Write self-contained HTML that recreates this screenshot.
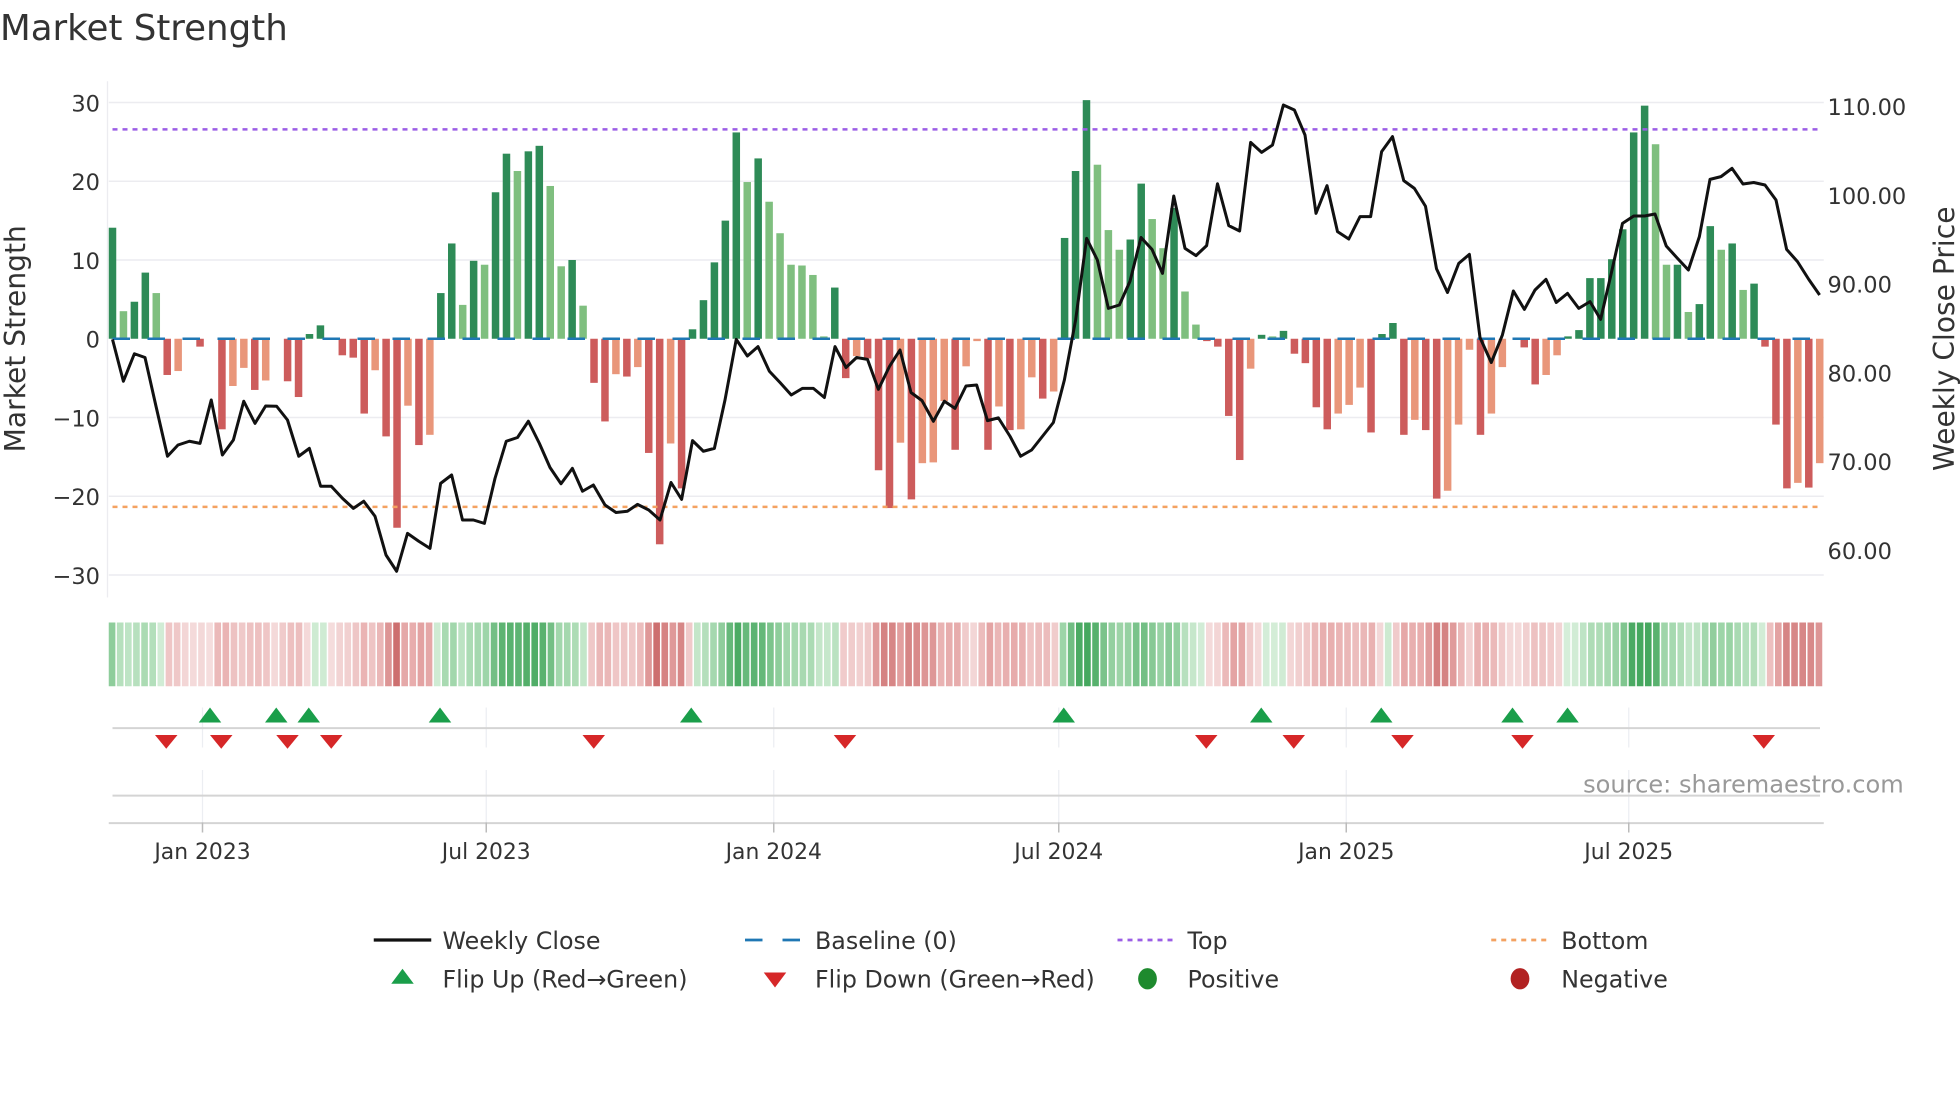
<!DOCTYPE html>
<html><head><meta charset="utf-8"><style>
html,body{margin:0;padding:0;background:#fff;width:1960px;height:1102px;overflow:hidden}
svg{display:block}
text{font-family:"DejaVu Sans","Liberation Sans",sans-serif;fill:#333}
</style></head><body>
<svg id="s" width="1960" height="1102" viewBox="0 0 1568 881.6" xmlns="http://www.w3.org/2000/svg">
<text x="0" y="32" font-size="28.5" fill="#333">Market Strength</text>
<g id="grid" stroke="#ececf0" stroke-width="1.2">
<line x1="87" x2="1459" y1="82" y2="82"/><line x1="87" x2="1459" y1="145" y2="145"/>
<line x1="87" x2="1459" y1="208" y2="208"/><line x1="87" x2="1459" y1="334" y2="334"/>
<line x1="87" x2="1459" y1="397" y2="397"/><line x1="87" x2="1459" y1="460" y2="460"/>
</g>
<line x1="86" x2="86" y1="65" y2="478" stroke="#ececf0" stroke-width="1"/>
<g font-size="18" text-anchor="end">
<text x="80" y="89">30</text><text x="80" y="152">20</text><text x="80" y="215">10</text>
<text x="80" y="278">0</text><text x="80" y="341">−10</text><text x="80" y="404">−20</text><text x="80" y="467">−30</text>
</g>
<g font-size="18">
<text x="1462" y="92">110.00</text><text x="1462" y="163">100.00</text><text x="1462" y="234">90.00</text>
<text x="1462" y="305">80.00</text><text x="1462" y="376">70.00</text><text x="1462" y="447">60.00</text>
</g>
<text transform="translate(20,271) rotate(-90)" font-size="22.5" text-anchor="middle">Market Strength</text>
<text transform="translate(1563,271) rotate(-90)" font-size="22.5" text-anchor="middle">Weekly Close Price</text>
<g id="bars"></g>
<line x1="90" x2="1456" y1="271" y2="271" stroke="#1f77b4" stroke-width="2" stroke-dasharray="14 14"/>
<line x1="90" x2="1456" y1="103.5" y2="103.5" stroke="#9b5de5" stroke-width="2" stroke-dasharray="4 4"/>
<line x1="90" x2="1456" y1="405.5" y2="405.5" stroke="#f4a261" stroke-width="2" stroke-dasharray="4 4"/>
<polyline id="price" fill="none" stroke="#111" stroke-width="2.4" stroke-linejoin="round"/>
<g id="heat"></g>
<g stroke="#eceef2" stroke-width="1">
<line x1="162" x2="162" y1="566" y2="598"/><line x1="389" x2="389" y1="566" y2="598"/><line x1="619" x2="619" y1="566" y2="598"/><line x1="847" x2="847" y1="566" y2="598"/><line x1="1077" x2="1077" y1="566" y2="598"/><line x1="1303" x2="1303" y1="566" y2="598"/>
<line x1="162" x2="162" y1="616" y2="658"/><line x1="389" x2="389" y1="616" y2="658"/><line x1="619" x2="619" y1="616" y2="658"/><line x1="847" x2="847" y1="616" y2="658"/><line x1="1077" x2="1077" y1="616" y2="658"/><line x1="1303" x2="1303" y1="616" y2="658"/>
</g>
<line x1="90" x2="1456" y1="582.5" y2="582.5" stroke="#d4d4d4" stroke-width="1.6"/>
<line x1="90" x2="1456" y1="636.5" y2="636.5" stroke="#d4d4d4" stroke-width="1.6"/>
<line x1="87" x2="1459" y1="658.5" y2="658.5" stroke="#d4d4d4" stroke-width="1.6"/>
<g stroke="#bbb" stroke-width="1.2">
<line x1="162" x2="162" y1="658" y2="666"/><line x1="389" x2="389" y1="658" y2="666"/><line x1="619" x2="619" y1="658" y2="666"/><line x1="847" x2="847" y1="658" y2="666"/><line x1="1077" x2="1077" y1="658" y2="666"/><line x1="1303" x2="1303" y1="658" y2="666"/>
</g>
<g id="tri"></g>
<text x="1523" y="634" font-size="19.3" text-anchor="end" style="fill:#999">source: sharemaestro.com</text>
<g font-size="17.5" text-anchor="middle">
<text x="162" y="687">Jan 2023</text><text x="389" y="687">Jul 2023</text><text x="619" y="687">Jan 2024</text>
<text x="847" y="687">Jul 2024</text><text x="1077" y="687">Jan 2025</text><text x="1303" y="687">Jul 2025</text>
</g>
<g font-size="19">
<line x1="299" x2="345" y1="752" y2="752" stroke="#111" stroke-width="2.6"/>
<text x="354" y="759">Weekly Close</text>
<line x1="596" x2="642" y1="752" y2="752" stroke="#1f77b4" stroke-width="2.2" stroke-dasharray="14 16"/>
<text x="652" y="759">Baseline (0)</text>
<line x1="894" x2="940" y1="752" y2="752" stroke="#9b5de5" stroke-width="2.2" stroke-dasharray="4 4"/>
<text x="950" y="759">Top</text>
<line x1="1193" x2="1239" y1="752" y2="752" stroke="#f4a261" stroke-width="2.2" stroke-dasharray="4 4"/>
<text x="1249" y="759">Bottom</text>
<polygon points="322,775 331,787 313,787" fill="#1a9e4a"/>
<text x="354" y="790">Flip Up (Red→Green)</text>
<polygon points="611,778 629,778 620,790" fill="#d62728"/>
<text x="652" y="790">Flip Down (Green→Red)</text>
<ellipse cx="918" cy="783" rx="7.5" ry="8.5" fill="#1e8a2e"/>
<text x="950" y="790">Positive</text>
<ellipse cx="1216" cy="783" rx="7.5" ry="8.5" fill="#b22222"/>
<text x="1249" y="790">Negative</text>
</g>
</svg>
<script>
var NS="http://www.w3.org/2000/svg";
var d="D14.1 L3.5 D4.7 D8.4 L5.8 R-4.6 O-4.1 Z0 R-1 Z0 R-11.5 O-6 O-3.7 R-6.5 O-5.3 Z0 R-5.4 R-7.4 D0.6 D1.7 Z0 R-2.1 R-2.4 R-9.5 O-4 R-12.4 R-24 O-8.5 R-13.5 O-12.2 D5.8 D12.1 L4.3 D9.9 L9.4 D18.6 D23.5 L21.3 D23.8 D24.5 L19.4 L9.2 D10 L4.2 R-5.6 R-10.5 O-4.5 R-4.8 O-3.6 R-14.5 R-26.1 O-13.3 R-19 D1.2 D4.9 D9.7 D15 D26.2 L19.9 D22.9 L17.4 L13.4 L9.4 L9.3 L8.1 L0.3 D6.5 R-5 O-2.2 R-2.5 R-16.7 R-21.5 O-13.2 R-20.4 O-15.8 O-15.7 O-7.9 R-14.1 O-3.5 O-0.3 R-14.1 O-8.6 R-11.6 O-11.5 O-4.9 R-7.6 O-6.7 D12.8 D21.3 D30.3 L22.1 L13.8 L11.3 D12.6 D19.7 L15.2 L11.5 D16.6 L6 L1.8 R-0.3 R-1 R-9.8 R-15.4 O-3.8 D0.5 L0.3 D1 R-1.9 R-3.1 R-8.7 R-11.5 O-9.5 O-8.4 O-6.2 R-11.9 D0.6 D2 R-12.2 O-10.3 R-11.6 R-20.3 O-19.3 O-10.9 O-1.4 R-12.2 O-9.5 O-3.6 Z0 R-1.1 R-5.8 O-4.6 O-2.1 D0.3 D1.1 D7.7 D7.7 D10.1 D13.9 D26.2 D29.6 L24.7 L9.4 D9.4 L3.4 D4.4 D14.3 L11.3 D12.1 L6.2 D7 R-1 R-10.9 R-19 O-18.3 R-18.9 O-15.8".split(" ");
var col={D:"#2e8b57",L:"#7fbf7f",R:"#cd5c5c",O:"#e9967a"};
var vals=[],bars=document.getElementById("bars");
d.forEach(function(s,i){var t=s[0],v=parseFloat(s.slice(1));vals.push(v);if(t=="Z")return;
var x=90+i*8.755,y0=271,y1=271-v*6.3;var r=document.createElementNS(NS,"rect");
r.setAttribute("x",x-3);r.setAttribute("width",6);r.setAttribute("y",Math.min(y0,y1));r.setAttribute("height",Math.max(0.8,Math.abs(y1-y0)));r.setAttribute("fill",col[t]);bars.appendChild(r);});
var p=[[90,271.5],[98.7,305],[107.5,283],[116,286],[124.8,325],[134,365],[142.4,356],[151.5,353],[160,354.7],[169,320],[177.9,364],[186.7,352],[195,321],[204,338.7],[212.5,324.8],[221.3,325],[230,336],[239,365],[247.5,358.7],[256.5,389],[265,389],[274,398.7],[282.7,406.7],[291,401],[300,413],[308.8,444],[317.3,457],[326,426.7],[335,433],[344,438.7],[352.5,386.7],[361.3,380],[370,416],[378.7,416],[387.5,418.7],[396,382.7],[405,353],[414,350],[422.7,337],[431.5,354.7],[440,374],[448.8,387],[457.9,374.7],[466,393],[474.7,388],[484,404],[492.8,410],[501.9,409],[510,403.5],[519,408],[528,416],[536.8,386],[545.3,399.5],[554,352.5],[562.7,361],[571.5,358.7],[580,320],[589,271.5],[597.9,284.8],[606.4,277.3],[615.5,297],[624,306],[633,316],[641.9,310.7],[650.7,310.7],[659.5,318],[668,277.3],[676.8,294],[685.3,286],[694,287.5],[702.7,311.5],[711.5,293.3],[720,280],[728.8,314],[737.6,320.5],[746.7,337],[755.5,321],[764,326.7],[772.8,308.8],[781.3,308],[790,336.5],[798.7,334.3],[808,349],[816.5,365],[825.3,360],[834,349],[842.7,338],[851.5,304],[860.5,256],[869.3,190.7],[877.9,208],[886.7,246.7],[895.5,244],[904,225],[912.8,190],[921.6,199.5],[930,218.7],[939,156.8],[948,198.7],[956.8,204.5],[965.3,196.5],[974,147],[983,180.5],[991.7,184.8],[1000.5,113.9],[1009.3,121.9],[1018,116],[1026.7,84],[1035.5,88],[1044,108],[1052.8,170.7],[1061.6,148.5],[1070,185.3],[1079,191.2],[1088,173.3],[1096.5,173.3],[1105.3,121.3],[1114,109.3],[1123,144.5],[1131.5,150.7],[1140.4,165],[1149.2,215],[1158,234],[1167,210.7],[1175.5,203.5],[1184,270],[1193,290],[1201.9,268],[1210.7,232.8],[1219.5,247.5],[1228,232],[1236.8,223.5],[1245,242],[1254,234.7],[1263,246.7],[1272,241.3],[1280.5,255.5],[1289,218.7],[1298,178.7],[1307,172.8],[1315.7,172.8],[1324,171.2],[1333,196.8],[1342,206.7],[1350.7,216],[1359.5,189.3],[1368,143.5],[1376.8,141.3],[1385.6,134.7],[1394.4,147.2],[1403,146],[1412,148],[1420.8,160],[1429.3,199.5],[1438,209.3],[1447,223.5],[1455.7,236]];
document.getElementById("price").setAttribute("points",p.map(function(a){return a.join(",")}).join(" "));
function mix(a,b,t){var r=[];for(var k=0;k<3;k++)r.push(Math.round(a[k]+(b[k]-a[k])*t));return "rgb("+r.join(",")+")";}
var heat=document.getElementById("heat"),N=211,pitch=1372/N;
for(var c=0;c<N;c++){var cx=87+c*pitch+pitch/2;var fi=(cx-90)/8.755;fi=Math.max(0,Math.min(156,fi));
var i0=Math.floor(fi),i1=Math.min(156,i0+1),f=fi-i0;var v=vals[i0]*(1-f)+vals[i1]*f;
var t=Math.min(1,Math.abs(v)/26);t=Math.pow(t,0.8);var fill;
if(v>=0)fill=t<0.5?mix([216,239,219],[160,214,170],t*2):mix([160,214,170],[70,168,95],(t-0.5)*2);
else fill=t<0.5?mix([245,222,222],[232,174,174],t*2):mix([232,174,174],[200,100,100],(t-0.5)*2);
var r=document.createElementNS(NS,"rect");r.setAttribute("x",87+c*pitch);r.setAttribute("width",pitch-1.2);r.setAttribute("y",498);r.setAttribute("height",51);r.setAttribute("fill",fill);heat.appendChild(r);}
var tri=document.getElementById("tri");
[168,221,247,352,553,851,1009,1105,1210,1254].forEach(function(x){var g=document.createElementNS(NS,"polygon");g.setAttribute("points",(x)+",566 "+(x+9)+",578 "+(x-9)+",578");g.setAttribute("fill","#1a9e4a");tri.appendChild(g);});
[133,177,230,265,475,676,965,1035,1122,1218,1411].forEach(function(x){var g=document.createElementNS(NS,"polygon");g.setAttribute("points",(x-9)+",588 "+(x+9)+",588 "+x+",599");g.setAttribute("fill","#d62728");tri.appendChild(g);});
</script>
</body></html>
